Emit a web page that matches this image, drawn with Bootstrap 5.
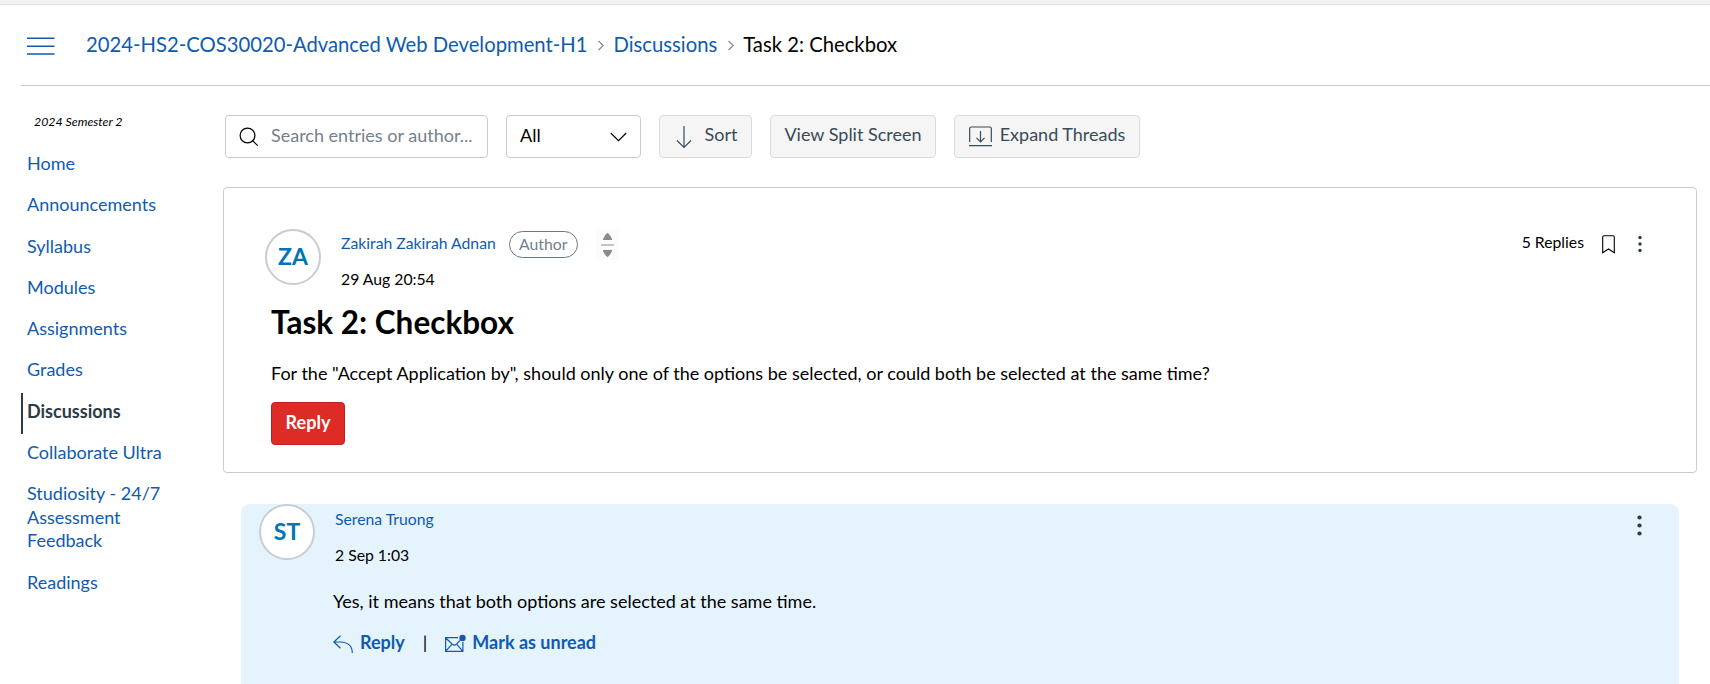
<!DOCTYPE html>
<html lang="en">
<head>
<meta charset="utf-8">
<meta name="viewport" content="width=device-width, initial-scale=1">
<title>Task 2: Checkbox</title>
<link rel="stylesheet" href="https://cdn.jsdelivr.net/npm/bootstrap@5.3.0/dist/css/bootstrap.min.css">
<style>
  body { font-family: Lato, "Liberation Sans", sans-serif; font-size: 18px; line-height: 24px; color: #000; background: #fff; }
  a { color: #0e5bb0; text-decoration: none; }
  svg { display: block; flex: none; fill: none; stroke: currentColor; }
  .top-strip { height: 5px; background: #f3f3f3; border-bottom: 1px solid #e2e2e2; }
  .page-head { height: 81px; margin-left: 21px; border-bottom: 1px solid #c7cdd1; padding: 0 0 1px 6px; }
  .menu-btn { color: #0e5bb0; margin-top: 2px; }
  .crumbs { font-size: 20.25px; margin: -2px 0 0 31px; }
  .crumbs svg { color: #73818c; margin: 3px 9px 0 11px; }
  .side { width: 223px; padding: 24px 0 0 21px; }
  .term { font-size: 12.375px; font-style: italic; padding-left: 13px; line-height: 24px; margin-bottom: 11px; }
  .side .nav-link { color: #0e5bb0; padding: 7px 40px 10.7px 4px; line-height: 23.6px; border-left: 2px solid transparent; }
  .side .nav-link.active { color: #2d3b45; font-weight: 700; border-color: #2d3b45; }
  .tools { gap: 18px; padding: 29px 0 0 2px; }
  .tool { height: 43px; border: 1px solid #c7cdd1; border-radius: 4px; display: flex; align-items: center; white-space: nowrap; }
  .tool-btn { background: #f5f5f5; border-color: #d9dcde; color: #394b58; padding-bottom: 6px; justify-content: center; }
  .search { width: 263px; padding-left: 13px; }
  .search input { border: 0; outline: 0; padding: 0 0 3px; background: none; width: 215px; margin-left: 12px; color: #000; }
  .search input::placeholder { color: #73818c; opacity: 1; }
  .topic { margin-top: 29px; height: 286px; border: 1px solid #c7cdd1; border-radius: 4px; padding: 41px 54px 0 41px; }
  .avatar { width: 56px; height: 56px; border: 2px solid #c7cdd1; border-radius: 50%; background: #fff; color: #0374b5; font-weight: 700; font-size: 23px; padding-bottom: 3px; flex: none; }
  .meta { font-size: 15.75px; line-height: 20px; }
  .pill { border: 1px solid #6b7780; color: #73818c; border-radius: 14px; height: 27px; width: 69px; line-height: 23px; text-align: center; margin-left: 13px; }
  .sorter { width: 23px; height: 31px; background: #fbfbfb; margin-left: 18px; }
  .title { font-size: 31.5px; font-weight: 700; line-height: 40px; margin: 13px 0 0 6px; }
  .reply-btn { background: #dd2c26; border: 1px solid #c2201b; color: #fff; width: 74px; height: 43px; font-weight: 700; }
  .entry { margin: 31px 18px 0; height: 180px; background: #e5f3fc; border-radius: 9px 9px 0 0; padding: 0 32px 0 18px; }
  .act { color: #0e5bb0; font-weight: 700; }
</style>
</head>
<body>
<div class="top-strip"></div>
<header class="page-head d-flex align-items-center">
  <a href="#" class="menu-btn" aria-label="Menu"><svg width="28" height="18" stroke-width="1.4"><path d="M0 1.3h27.5M0 9.3h27.5M0 17h27.5"/></svg></a>
  <nav class="crumbs d-flex align-items-center">
    <a href="#">2024-HS2-COS30020-Advanced Web Development-H1</a>
    <svg width="6" height="11" stroke-width="1.1"><path d="M.5.8l4.7 4.7-4.7 4.7"/></svg>
    <a href="#">Discussions</a>
    <svg width="6" height="11" stroke-width="1.1"><path d="M.5.8l4.7 4.7-4.7 4.7"/></svg>
    <span>Task 2: Checkbox</span>
  </nav>
</header>
<div class="d-flex">
  <aside class="side flex-shrink-0">
    <div class="term">2024 Semester 2</div>
    <nav class="nav flex-column">
      <a class="nav-link" href="#">Home</a>
      <a class="nav-link" href="#">Announcements</a>
      <a class="nav-link" href="#">Syllabus</a>
      <a class="nav-link" href="#">Modules</a>
      <a class="nav-link" href="#">Assignments</a>
      <a class="nav-link" href="#">Grades</a>
      <a class="nav-link active" href="#">Discussions</a>
      <a class="nav-link" href="#">Collaborate Ultra</a>
      <a class="nav-link" href="#">Studiosity - 24/7 Assessment Feedback</a>
      <a class="nav-link" href="#">Readings</a>
    </nav>
  </aside>
  <main class="flex-grow-1" style="margin-right:13px">
    <div class="tools d-flex">
      <div class="tool search">
        <svg width="20" height="20" stroke-width="1.2"><circle cx="8.5" cy="8.5" r="7.4"/><path d="M13.5 13.5l5.2 5.2"/></svg>
        <input type="text" placeholder="Search entries or author..." aria-label="Search">
      </div>
      <div class="tool justify-content-between" style="width:135px;padding:0 13px">
        <span style="margin-top:-3px">All</span>
        <svg width="17" height="10" stroke-width="1.2"><path d="M.8 1l7.7 7.7L16.2 1"/></svg>
      </div>
      <button class="tool tool-btn" style="width:93px;gap:13px;padding-left:8px">
        <svg width="16" height="24" stroke-width="1.2" style="margin-top:5px"><path d="M8 1v21.5M1 15.500l7 7 7-7"/></svg>Sort
      </button>
      <button class="tool tool-btn" style="width:166px">View Split Screen</button>
      <button class="tool tool-btn" style="width:186px;gap:8px">
        <svg width="23" height="21" stroke-width="1.2" style="margin-top:4px"><path d="M.7 16V2.5Q.7 1 2.2 1h18.600q1.500 0 1.500 1.500V16M0 19.700h23M11.500 5v10.500M7.500 11.800l4 4 4-4"/></svg>Expand Threads
      </button>
    </div>
    <section class="topic">
      <div class="d-flex">
        <div class="avatar d-flex align-items-center justify-content-center">ZA</div>
        <div class="meta" style="margin-left:20px">
          <div class="d-flex align-items-center" style="height:31px">
            <a href="#" style="margin-top:-3px">Zakirah Zakirah Adnan</a>
            <span class="pill">Author</span>
            <span class="sorter d-flex align-items-center justify-content-center"><svg width="13" height="24"><g fill="#8a8a8a" stroke="none"><path d="M6.500 0Q8 0 11 6v1H2V6Q5 0 6.500 0zM6.500 24Q8 24 11 18v-1H2v1Q5 24 6.500 24z"/><path d="M0 11.500h13v1H0z"/></g></svg></span>
          </div>
          <div style="margin-top:9px">29 Aug 20:54</div>
        </div>
        <div class="meta ms-auto d-flex align-items-center" style="height:30px;margin-top:-1px">
          <span style="margin-top:-3px">5 Replies</span>
          <svg width="13" height="19" stroke="#2d3b45" stroke-width="1.1" style="margin:2px 0 0 18px"><path d="M.7 17.700V2Q.7.700 2 .7h9Q12.300.7 12.300 2v15.700L6.500 14z"/></svg>
          <svg width="4" height="18" style="margin:2px 0 0 23px;fill:#2d3b45;stroke:none"><circle cx="2" cy="2.500" r="1.700"/><circle cx="2" cy="9" r="1.700"/><circle cx="2" cy="15.500" r="1.700"/></svg>
        </div>
      </div>
      <h1 class="title">Task 2: Checkbox</h1>
      <p class="mb-0" style="margin:19px 0 0 6px">For the "Accept Application by", should only one of the options be selected, or could both be selected at the same time?</p>
      <button class="tool reply-btn justify-content-center" style="margin:17px 0 0 6px;padding-bottom:5px">Reply</button>
    </section>
    <section class="entry">
      <div class="d-flex">
        <div class="avatar d-flex align-items-center justify-content-center">ST</div>
        <div class="meta" style="margin-left:20px;padding-top:5px">
          <a href="#">Serena Truong</a>
          <div style="margin-top:16px">2 Sep 1:03</div>
        </div>
        <svg class="ms-auto" width="5" height="21" style="margin:11px 5px 0 0;fill:#2d3b45;stroke:none"><circle cx="2.500" cy="2.500" r="2.100"/><circle cx="2.500" cy="10.500" r="2.100"/><circle cx="2.500" cy="18.500" r="2.100"/></svg>
      </div>
      <p style="margin:24px 0 0 74px">Yes, it means that both options are selected at the same time.</p>
      <div class="d-flex align-items-center act" style="margin:17px 0 0 74px">
        <svg width="20" height="19" stroke-width="1.2" class="mt-1"><path d="M7.500.7L.9 7l6.600 6.300M1 7h6.500Q19.300 7.500 19.300 18"/></svg>
        <a href="#" style="margin-left:7px">Reply</a>
        <span class="fw-normal text-black" style="margin:0 18px">|</span>
        <svg width="21" height="19" stroke-width="1.2" style="margin-top:3px"><path d="M13 3.600H.6v13.800h17.300V8M.8 4l6.500 6.300q2 1.600 4 0L15 6.500M.8 17.200l5.800-6.500M17.700 17.200L12 10.700"/><circle cx="17.500" cy="4" r="3.200" fill="currentColor" stroke="none"/></svg>
        <a href="#" style="margin-left:6px">Mark as unread</a>
      </div>
    </section>
  </main>
</div>
<script src="https://cdn.jsdelivr.net/npm/bootstrap@5.3.0/dist/js/bootstrap.bundle.min.js"></script>
</body>
</html>
